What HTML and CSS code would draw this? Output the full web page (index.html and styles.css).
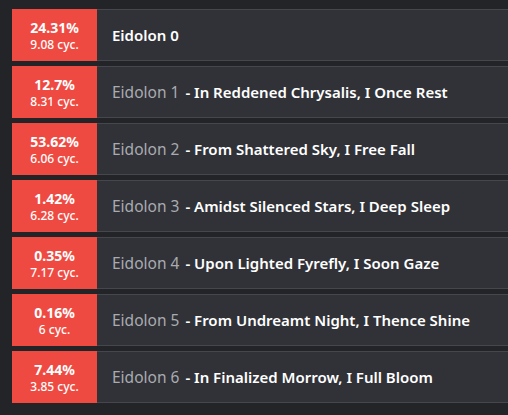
FILE: index.html
```html
<!DOCTYPE html>
<html>
<head>
<meta charset="utf-8">
<link rel="stylesheet" href="styles.css">
</head>
<body>
<div class="list">
  <div class="row">
    <div class="stat"><div class="pct">24.31%</div><div class="cyc">9.08 cyc.</div></div>
    <div class="info"><span class="title main">Eidolon 0</span></div>
  </div>
  <div class="row">
    <div class="stat"><div class="pct">12.7%</div><div class="cyc">8.31 cyc.</div></div>
    <div class="info"><span class="title">Eidolon 1</span><span class="name">- In Reddened Chrysalis, I Once Rest</span></div>
  </div>
  <div class="row">
    <div class="stat"><div class="pct">53.62%</div><div class="cyc">6.06 cyc.</div></div>
    <div class="info"><span class="title">Eidolon 2</span><span class="name">- From Shattered Sky, I Free Fall</span></div>
  </div>
  <div class="row">
    <div class="stat"><div class="pct">1.42%</div><div class="cyc">6.28 cyc.</div></div>
    <div class="info"><span class="title">Eidolon 3</span><span class="name">- Amidst Silenced Stars, I Deep Sleep</span></div>
  </div>
  <div class="row">
    <div class="stat"><div class="pct">0.35%</div><div class="cyc">7.17 cyc.</div></div>
    <div class="info"><span class="title">Eidolon 4</span><span class="name">- Upon Lighted Fyrefly, I Soon Gaze</span></div>
  </div>
  <div class="row">
    <div class="stat"><div class="pct">0.16%</div><div class="cyc">6 cyc.</div></div>
    <div class="info"><span class="title">Eidolon 5</span><span class="name">- From Undreamt Night, I Thence Shine</span></div>
  </div>
  <div class="row">
    <div class="stat"><div class="pct">7.44%</div><div class="cyc">3.85 cyc.</div></div>
    <div class="info"><span class="title">Eidolon 6</span><span class="name">- In Finalized Morrow, I Full Bloom</span></div>
  </div>
</div>
</body>
</html>
```
FILE: styles.css
```css
html, body {
  margin: 0;
  padding: 0;
  background: #232428;
  font-family: "Noto Sans", "Open Sans", sans-serif;
  overflow: hidden;
}
.list {
  display: flex;
  flex-direction: column;
  gap: 5px;
  padding: 9px 0 0 12px;
}
.row {
  display: flex;
  height: 52px;
}
.stat {
  width: 85px;
  flex: none;
  background: #ef4a41;
  color: #fff;
  display: flex;
  flex-direction: column;
  align-items: center;
  justify-content: center;
}
.pct {
  font-size: 14px;
  font-weight: 700;
  line-height: 19px;
}
.cyc {
  font-size: 12px;
  font-weight: 500;
  line-height: 16px;
}
.info {
  flex: 1;
  background: #313238;
  border-top: 1px solid #46474d;
  border-bottom: 1px solid #46474d;
  display: flex;
  align-items: center;
  gap: 6px;
  padding-left: 15px;
  white-space: nowrap;
}
.title {
  color: #a9abb0;
  font-size: 15.5px;
}
.title.main {
  color: #fff;
  font-size: 15px;
  font-weight: 600;
}
.name {
  color: #fff;
  font-size: 15px;
  font-weight: 600;
}
```
